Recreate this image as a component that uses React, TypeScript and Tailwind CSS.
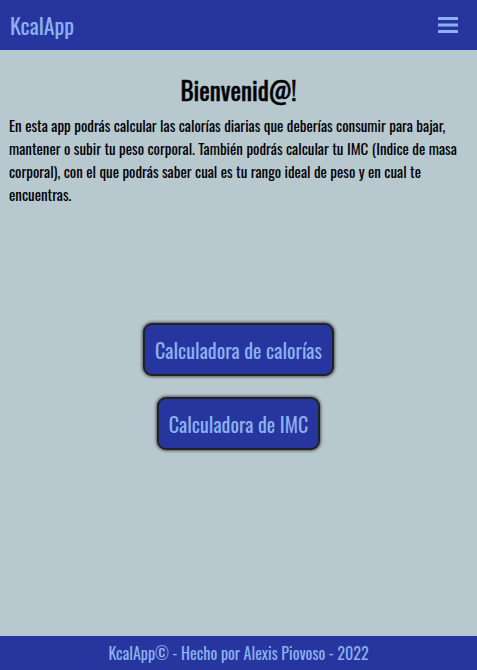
function MenuIcon() {
  return (
    <svg width="22" height="18" viewBox="0 0 22 18" className="fill-[#8cb0f2]">
      <rect x="1" y="1" width="20" height="3" />
      <rect x="1" y="7.5" width="20" height="3" />
      <rect x="1" y="14" width="20" height="3" />
    </svg>
  );
}

export default function App() {
  return (
    <div className="flex min-h-screen flex-col bg-[#b7c8cf] font-['Oswald','Roboto_Condensed',sans-serif]">
      <header className="flex h-[50px] items-center justify-between bg-[#27369e] pl-[10px] pr-[18px]">
        <h1 className="text-[22px] leading-none text-[#8cb0f2]">KcalApp</h1>
        <MenuIcon />
      </header>

      <main className="flex flex-1 flex-col px-[9px]">
        <h2 className="mt-[22px] text-center text-[25px] font-normal leading-[36px] text-black [-webkit-text-stroke:0.5px_black]">
          Bienvenid@!
        </h2>
        <p className="mt-[6px] text-[15px] leading-[23px] text-black">
          En esta app podrás calcular las calorías diarias que deberías consumir para bajar,
          mantener o subir tu peso corporal. También podrás calcular tu IMC (Indice de masa
          corporal), con el que podrás saber cual es tu rango ideal de peso y en cual te
          encuentras.
        </p>

        <div className="mt-[117px] flex flex-col items-center gap-[21px]">
          <button className="h-[53px] rounded-[9px] border-2 border-[#222] bg-[#27369e] px-[10px] text-[20px] text-[#8cb0f2] shadow-[0_0_3px_1px_#555]">
            Calculadora de calorías
          </button>
          <button className="h-[53px] rounded-[9px] border-2 border-[#222] bg-[#27369e] px-[10px] text-[20px] text-[#8cb0f2] shadow-[0_0_3px_1px_#555]">
            Calculadora de IMC
          </button>
        </div>
      </main>

      <footer className="flex h-[34px] items-center justify-center bg-[#27369e]">
        <p className="text-[16px] text-[#8cb0f2]">KcalApp© - Hecho por Alexis Piovoso - 2022</p>
      </footer>
    </div>
  );
}
